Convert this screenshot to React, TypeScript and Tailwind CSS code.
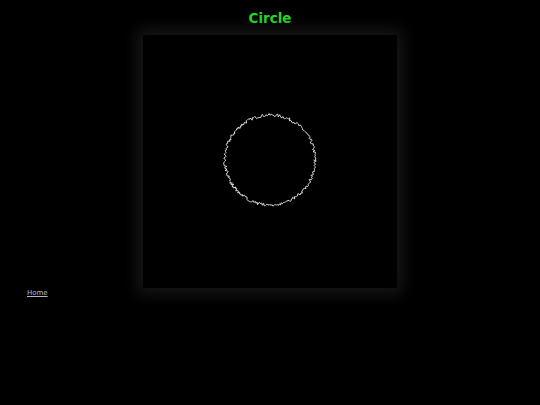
import React from "react";

// deterministic jitter so the ring looks hand-scribbled
function ringPath(cx: number, cy: number, r: number, steps: number) {
  let seed = 7;
  const rand = () => {
    seed = (seed * 16807) % 2147483647;
    return seed / 2147483647;
  };
  const pts: string[] = [];
  for (let i = 0; i <= steps; i++) {
    const a = (i / steps) * Math.PI * 2;
    const rr = r + (rand() - 0.5) * 3;
    pts.push(`${(cx + Math.cos(a) * rr).toFixed(2)},${(cy + Math.sin(a) * rr).toFixed(2)}`);
  }
  return "M" + pts.join(" L");
}

export default function App() {
  const d = ringPath(127, 125, 45, 300);
  return (
    <div className="min-h-[405px] bg-black text-white font-['DejaVu_Sans',sans-serif]">
      <h1 className="pt-[10px] text-center text-[13.5px] font-bold leading-[16px] text-[#22dd22]">
        Circle
      </h1>
      <div className="mt-[9px] flex justify-center">
        <div className="h-[253px] w-[254px] bg-black shadow-[0_0_14px_6px_rgba(40,40,40,0.55)]">
          <svg className="block" width="254" height="253" viewBox="0 0 254 253">
            <path d={d} fill="none" stroke="#dcdcdc" strokeWidth="1" />
          </svg>
        </div>
      </div>
      <div className="-mt-[3px] pl-[27px] leading-[10px]">
        <a href="#" className="text-[7px] leading-[10px] text-[#aabbcc] underline">
          Home
        </a>
      </div>
    </div>
  );
}
